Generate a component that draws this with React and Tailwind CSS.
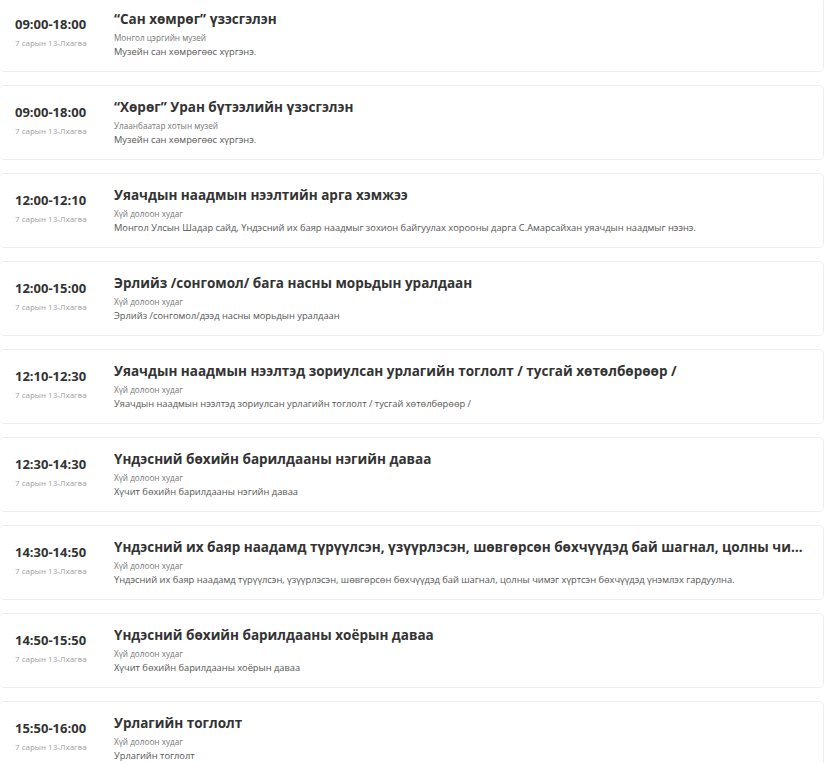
import React from "react";

const events = [
  {
    time: "09:00-18:00",
    title: "“Сан хөмрөг” үзэсгэлэн",
    place: "Монгол цэргийн музей",
    desc: "Музейн сан хөмрөгөөс хүргэнэ.",
  },
  {
    time: "09:00-18:00",
    title: "“Хөрөг” Уран бүтээлийн үзэсгэлэн",
    place: "Улаанбаатар хотын музей",
    desc: "Музейн сан хөмрөгөөс хүргэнэ.",
  },
  {
    time: "12:00-12:10",
    title: "Уяачдын наадмын нээлтийн арга хэмжээ",
    place: "Хүй долоон худаг",
    desc: "Монгол Улсын Шадар сайд, Үндэсний их баяр наадмыг зохион байгуулах хорооны дарга С.Амарсайхан уяачдын наадмыг нээнэ.",
  },
  {
    time: "12:00-15:00",
    title: "Эрлийз /сонгомол/ бага насны морьдын уралдаан",
    place: "Хүй долоон худаг",
    desc: "Эрлийз /сонгомол/дээд насны морьдын уралдаан",
  },
  {
    time: "12:10-12:30",
    title: "Уяачдын наадмын нээлтэд зориулсан урлагийн тоглолт / тусгай хөтөлбөрөөр /",
    place: "Хүй долоон худаг",
    desc: "Уяачдын наадмын нээлтэд зориулсан урлагийн тоглолт / тусгай хөтөлбөрөөр /",
  },
  {
    time: "12:30-14:30",
    title: "Үндэсний бөхийн барилдааны нэгийн даваа",
    place: "Хүй долоон худаг",
    desc: "Хүчит бөхийн барилдааны нэгийн даваа",
  },
  {
    time: "14:30-14:50",
    title: "Үндэсний их баяр наадамд түрүүлсэн, үзүүрлэсэн, шөвгөрсөн бөхчүүдэд бай шагнал, цолны чимэг хүртсэн бөхчүүдэд үнэмлэх гардуулна",
    place: "Хүй долоон худаг",
    desc: "Үндэсний их баяр наадамд түрүүлсэн, үзүүрлэсэн, шөвгөрсөн бөхчүүдэд бай шагнал, цолны чимэг хүртсэн бөхчүүдэд үнэмлэх гардуулна.",
  },
  {
    time: "14:50-15:50",
    title: "Үндэсний бөхийн барилдааны хоёрын даваа",
    place: "Хүй долоон худаг",
    desc: "Хүчит бөхийн барилдааны хоёрын даваа",
  },
  {
    time: "15:50-16:00",
    title: "Урлагийн тоглолт",
    place: "Хүй долоон худаг",
    desc: "Урлагийн тоглолт",
  },
];

const EventCard = ({ item }) => (
  <div className="flex h-[75px] shrink-0 bg-white border border-[#eeeeee] rounded-[5px] pl-[15px] pr-[14px]">
    <div className="w-[99px] shrink-0 pt-[18px]">
      <div className="text-[13px] leading-[16px] font-bold text-[#333333]">{item.time}</div>
      <div className="mt-[5px] text-[8px] leading-[11px] text-[#a0a0a0]">7 сарын 13-Лхагва</div>
    </div>
    <div className="flex-1 min-w-0 pt-[12px]">
      <div className="text-[13.5px] leading-[18px] font-bold text-[#333333] truncate">{item.title}</div>
      <div className="mt-[5px] text-[8.2px] leading-[10px] text-[#777777]">{item.place}</div>
      <div className="mt-[3px] text-[9.3px] leading-[12px] text-[#555555] truncate">{item.desc}</div>
    </div>
  </div>
);

export default function App() {
  return (
    <div
      className="min-h-screen bg-white overflow-hidden"
      style={{ fontFamily: '"Open Sans", "Noto Sans", sans-serif' }}
    >
      <div className="flex flex-col gap-[13px] -mt-[3px] -ml-[1px] w-[825px]">
        {events.map((item, i) => (
          <EventCard key={i} item={item} />
        ))}
      </div>
    </div>
  );
}
